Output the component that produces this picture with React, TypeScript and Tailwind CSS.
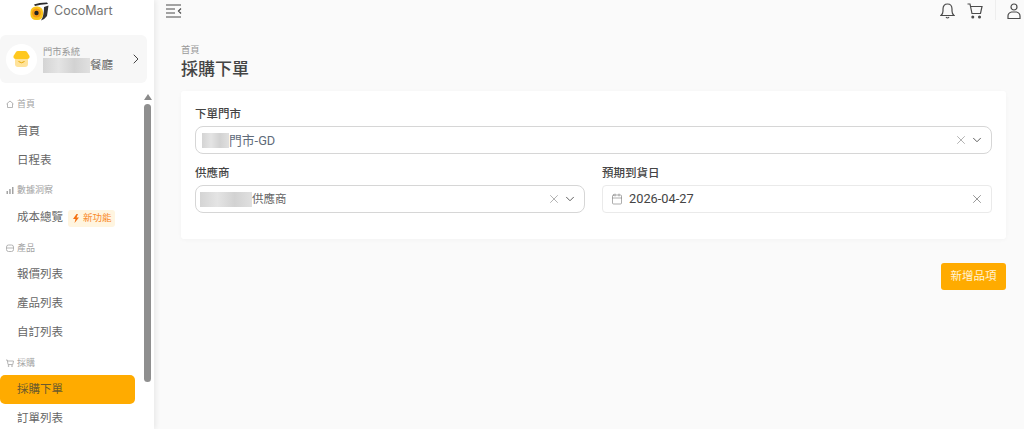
import { ChevronDown, ChevronRight, X, Calendar } from 'lucide-react'

const fontStack = 'font-[Inter,"Noto_Sans_CJK_TC",sans-serif]'

function Blur({ className }: { className: string }) {
  return <span className={`inline-block bg-[linear-gradient(90deg,#d4d4d4,#e4e4e4,#d2d2d2,#e0e0e0)] ${className}`} />
}

function SectionLabel({ icon, label, className }: { icon: React.ReactNode; label: string; className: string }) {
  return (
    <div className={`flex items-center gap-[3px] pl-[6px] text-[9px] leading-[12px] text-[#a3a3a3] ${className}`}>
      {icon}
      <span>{label}</span>
    </div>
  )
}

function NavItem({ label, active, children }: { label: string; active?: boolean; children?: React.ReactNode }) {
  return (
    <div
      className={`flex h-[29px] items-center gap-[5px] rounded-[5px] pl-[17px] pt-px text-[11.500px] ${
        active ? 'bg-[#ffab00] text-[#6b5a2e]' : 'text-[#666666]'
      }`}
    >
      {label}
      {children}
    </div>
  )
}

function Logo() {
  return (
    <svg width="19" height="20" viewBox="0 0 19 20">
      <path d="M4 3.500 Q9 1.500 17 1.500 L18 3 Q10 3.500 5 5 Z" fill="#2b2b2b" />
      <path d="M14 6 L18.500 4.500 L17 15 Q14 19 11 19.500 Q14 15 14 6 Z" fill="#333333" />
      <rect x="0.500" y="5.500" width="12.500" height="13.500" rx="5.500" fill="#fbc51b" />
      <circle cx="6.500" cy="12" r="4.500" fill="#f59a14" />
      <circle cx="6.500" cy="12" r="2.200" fill="#222222" />
    </svg>
  )
}

function StoreAvatar() {
  return (
    <div className="flex h-[31px] w-[31px] shrink-0 items-center justify-center rounded-full bg-white">
      <svg width="17" height="17" viewBox="0 0 17 17">
        <rect x="2" y="6" width="13" height="10" rx="3" fill="#ffe39a" />
        <path d="M3 8 Q0 8 0.500 5 L3 1 Q3.500 0 5 0 L12 0 Q13.500 0 14 1 L16.500 5 Q17 8 14 8 Z" fill="#ffc81f" />
        <path d="M5.500 10.500 Q8.500 13 11.500 10.500" stroke="#e8a800" strokeWidth="1" fill="none" />
      </svg>
    </div>
  )
}

function Sidebar() {
  return (
    <aside className="flex h-[429px] w-[154px] shrink-0 flex-col overflow-hidden bg-white shadow-[2px_0_5px_rgba(0,0,0,0.07)]">
      <div className="flex h-[35px] items-start gap-[5px] pl-[30px] pt-[1px]">
        <Logo />
        <span className="mt-[1px] text-[12.500px] leading-[17px] text-[#737373]">CocoMart</span>
      </div>
      <div className="mr-[7px] flex h-[48px] items-center rounded-[6px] bg-[#f7f7f7] pl-[6px] pr-[3px]">
        <StoreAvatar />
        <div className="ml-[6px] flex-1">
          <div className="text-[9.250px] leading-[12px] text-[#999999]">門市系統</div>
          <div className="flex items-center text-[11.500px] leading-[15px] text-[#666666]">
            <Blur className="h-[15px] w-[47px]" />
            餐廳
          </div>
        </div>
        <ChevronRight size={16} strokeWidth={1.5} className="text-[#444444]" />
      </div>
      <div className="flex min-h-0 flex-1 pt-[9px]">
        <nav className="w-[135px] shrink-0">
          <SectionLabel
            className="mt-[6px] mb-[7px]"
            label="首頁"
            icon={
              <svg width="8" height="8" viewBox="0 0 8 8" fill="none" stroke="#a3a3a3" strokeWidth="0.8">
                <path d="M0.500 4 L4 1 L7.500 4 M1.500 3.500 V7.500 H6.500 V3.500" />
              </svg>
            }
          />
          <NavItem label="首頁" />
          <NavItem label="日程表" />
          <SectionLabel
            className="mt-[9px] mb-[7px]"
            label="數據洞察"
            icon={
              <svg width="8" height="8" viewBox="0 0 8 8" fill="#a3a3a3">
                <rect x="0.500" y="5" width="1.500" height="3" />
                <rect x="3.200" y="3" width="1.500" height="5" />
                <rect x="6" y="1" width="1.500" height="7" />
              </svg>
            }
          />
          <NavItem label="成本總覽">
            <span className="flex h-[17px] items-center gap-[3px] rounded-[3px] bg-[#fff5e0] pl-[4px] pr-[3px] text-[9.500px] text-[#f98a2c]">
              <svg width="8" height="9" viewBox="0 0 8 9" fill="#f5700f">
                <path d="M4.500 0 L1 5 H3.500 L2.500 9 L7 3.500 H4.500 L6 0 Z" />
              </svg>
              新功能
            </span>
          </NavItem>
          <SectionLabel
            className="mt-[10px] mb-[6px]"
            label="產品"
            icon={
              <svg width="8" height="8" viewBox="0 0 8 8" fill="none" stroke="#a3a3a3" strokeWidth="0.8">
                <rect x="0.500" y="1" width="7" height="6.500" rx="2" />
                <path d="M0.500 4 H7.500" />
              </svg>
            }
          />
          <NavItem label="報價列表" />
          <NavItem label="產品列表" />
          <NavItem label="自訂列表" />
          <SectionLabel
            className="mt-[10px] mb-[6px]"
            label="採購"
            icon={
              <svg width="8" height="8" viewBox="0 0 8 8" fill="none" stroke="#a3a3a3" strokeWidth="0.8">
                <path d="M0 1 H1.300 L2 5.500 H6.800 L7.500 2 H1.500" />
                <circle cx="2.600" cy="7" r="0.500" />
                <circle cx="6" cy="7" r="0.500" />
              </svg>
            }
          />
          <NavItem label="採購下單" active />
          <NavItem label="訂單列表" />
        </nav>
        <div className="ml-[9px] flex w-[7px] flex-col items-center">
          <span className="mt-[2px] h-0 w-0 border-x-[4px] border-b-[6px] border-x-transparent border-b-[#8a8a8a]" />
          <span className="mt-[4px] h-[278px] w-[7px] rounded-full bg-[#8f8f8f]" />
        </div>
      </div>
    </aside>
  )
}

function TopBar() {
  return (
    <header className="flex h-[21px] items-start justify-between">
      <svg className="ml-[12px] mt-[4px]" width="16" height="14" viewBox="0 0 16 14" fill="none" stroke="#4b4b4b" strokeWidth="1.200">
        <path d="M0 1 H15 M0 5 H9 M0 9 H9 M0 13 H15 M15 4.500 L12.500 7 L15 9.500" />
      </svg>
      <div className="flex items-start">
        <svg className="mt-[3px]" width="15" height="16" viewBox="0 0 15 16" fill="none" stroke="#4b4b4b" strokeWidth="1.200">
          <path d="M1 12.500 Q3 11 3 8 V6 Q3 1 7.500 1 Q12 1 12 6 V8 Q12 11 14 12.500 Z M6 14 Q7.500 16 9 14" />
        </svg>
        <svg className="ml-[12px] mt-[3px]" width="16" height="16" viewBox="0 0 16 16" fill="none" stroke="#4b4b4b" strokeWidth="1.200">
          <path d="M0.500 1 H3 L5 10.500 H13.500 L15 3.500 H3.500" />
          <circle cx="5.800" cy="14" r="0.900" fill="#4b4b4b" />
          <circle cx="12.500" cy="14" r="0.900" fill="#4b4b4b" />
        </svg>
        <span className="ml-[12px] h-[20px] w-px bg-[#eeeeee]" />
        <svg className="ml-[11px] mr-[3px] mt-[3px]" width="14" height="16" viewBox="0 0 14 16" fill="none" stroke="#4b4b4b" strokeWidth="1.200">
          <circle cx="7" cy="4" r="3" />
          <path d="M1 15.500 V13 Q1 10 4.500 9 H9.500 Q13 10 13 13 V15.500 Z" />
        </svg>
      </div>
    </header>
  )
}

function Field({ label, className, children }: { label: string; className?: string; children: React.ReactNode }) {
  return (
    <div className={className}>
      <div className="mb-[3px] text-[11.500px] font-medium leading-[17px] text-[#444444]">{label}</div>
      {children}
    </div>
  )
}

function SelectBox({ children }: { children: React.ReactNode }) {
  return (
    <div className="flex h-[28px] items-center gap-[2px] rounded-[8px] border border-[#d6d6d6] bg-white pl-[6px] pr-[7px] text-[11.500px] text-[#5f6b7a]">
      <div className="flex flex-1 items-center pt-px">{children}</div>
      <X size={14} strokeWidth={1.1} className="text-[#888888]" />
      <ChevronDown size={14} strokeWidth={1.6} className="text-[#555555]" />
    </div>
  )
}

export default function App() {
  return (
    <div className={`flex h-[429px] w-[1024px] overflow-hidden bg-[#fafafa] ${fontStack}`}>
      <Sidebar />
      <main className="min-w-0 flex-1 pr-[18px]">
        <div className="-mr-[18px]">
          <TopBar />
        </div>
        <div className="pl-[27px] pt-[23px]">
          <div className="text-[9.250px] leading-[12px] text-[#999999]">首頁</div>
          <h1 className="mt-[1px] text-[17px] font-medium leading-[24px] text-[#444444]">採購下單</h1>
          <section className="mt-[10px] h-[148px] rounded-[3px] bg-white px-[14px] pt-[15px] shadow-[0_1px_4px_rgba(0,0,0,0.03)]">
            <Field label="下單門市">
              <SelectBox>
                <Blur className="h-[15px] w-[27px]" />
                <span className="font-['Roboto','Noto_Sans_CJK_TC',sans-serif] text-[12.800px]">門市-GD</span>
              </SelectBox>
            </Field>
            <div className="mt-[11px] flex gap-[17px]">
              <Field label="供應商" className="flex-1">
                <SelectBox>
                  <Blur className="h-[15px] w-[52px] -ml-[2px]" />
                  <span className="text-[#666666]">供應商</span>
                </SelectBox>
              </Field>
              <Field label="預期到貨日" className="flex-1">
                <div className="flex h-[28px] items-center rounded-[4px] border border-[#eaeaea] bg-white pl-[8px] pr-[7px] text-[#444444]">
                  <Calendar size={12} strokeWidth={1.2} className="text-[#777777]" />
                  <span className="ml-[6px] flex-1 font-['Roboto',sans-serif] text-[12.800px]">2026-04-27</span>
                  <X size={14} strokeWidth={1.3} className="text-[#777777]" />
                </div>
              </Field>
            </div>
          </section>
          <div className="mt-[24px] flex justify-end">
            <button className="h-[27px] w-[65px] rounded-[3px] bg-[#ffab00] text-[11.500px] text-[#fff3d6]">新增品項</button>
          </div>
        </div>
      </main>
    </div>
  )
}
